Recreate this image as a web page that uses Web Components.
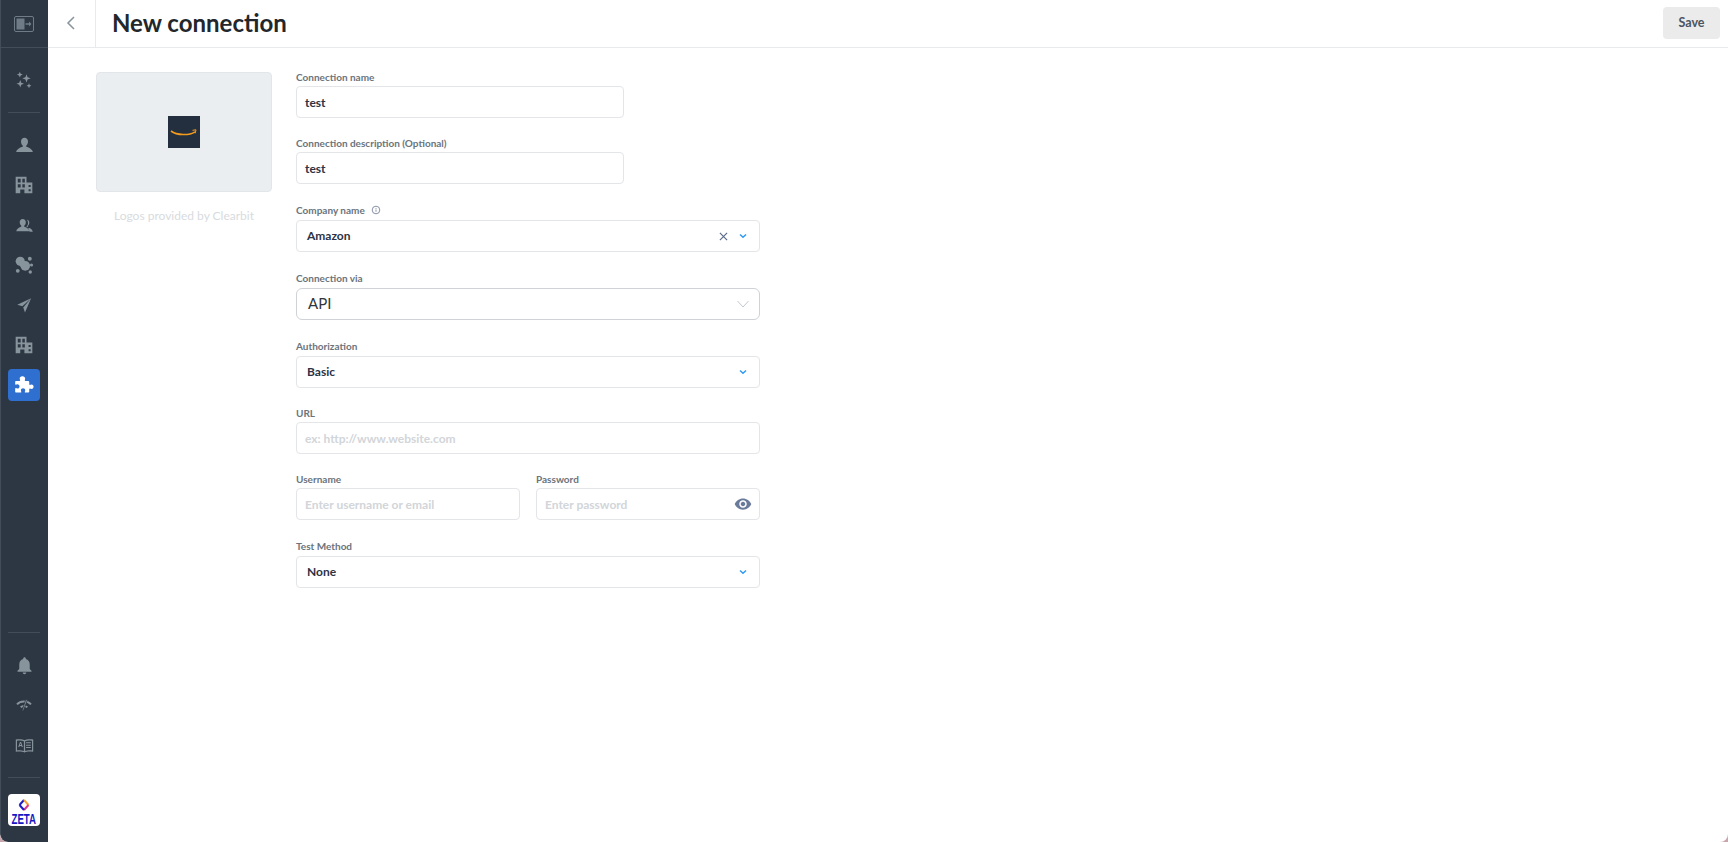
<!DOCTYPE html>
<html>
<head>
<meta charset="utf-8">
<title>New connection</title>
<style>
  html, body { margin: 0; height: 100%; background: #c9a6ad; }
  body { font-family: Lato, "Open Sans", sans-serif; overflow: hidden; }
</style>
</head>
<body>
<app-shell>
  <side-bar slot="nav"></side-bar>
  <top-bar slot="top" title="New connection"></top-bar>
  <logo-panel slot="logo"></logo-panel>
  <connection-form slot="form"></connection-form>
</app-shell>

<script>
const ICONS = {
  panel: '<rect x="2.500" y="4.500" width="19" height="15" rx="1.500" fill="none" stroke="currentColor" stroke-width="1"/><rect x="4.500" y="6.500" width="8" height="11"/><path d="M13.500 11.200h3.500V9.500l2.500 2.500-2.500 2.500v-1.700h-3.500z"/>',
  sparkle: '<path d="M7 2l1 2.500L10.500 5.500 8 6.500 7 9 6 6.500 3.500 5.500 6 4.500zM15 5l1.300 3.700L20 10l-3.700 1.300L15 15l-1.300-3.700L10 10l3.700-1.300zM7.500 12l1.200 3.300L12 16.500l-3.300 1.200L7.500 21l-1.200-3.300L3 16.500l3.300-1.200zM18 16l.9 2.100L21 19l-2.100.9L18 22l-.9-2.100L15 19l2.100-.9z"/>',
  person: '<path d="M12 3c-2.500 0-4 2-4 4.400 0 2 .9 3.800 2 4.700v1.200c-2.500.8-6.200 2-7.500 5.700v.5h19v-.5c-1.300-3.700-5-4.900-7.500-5.700v-1.200c1.100-.9 2-2.700 2-4.700C16 5 14.500 3 12 3z"/>',
  building: '<path fill-rule="evenodd" d="M2 2h13v7h7v13H2zM4.500 4.500V9H8V4.500zM10 4.500V9h3V4.500zM4.500 11v4H8v-4zM10 11v4h3v-4zM7.500 17.500V22h5v-4.500zM17.500 12v2.500H20V12zM17.500 17v2.500H20V17z"/>',
  people: '<path d="M10 4.500c-2.200 0-3.500 1.700-3.500 3.900 0 1.700.7 3.100 1.800 4v1c-2.200.7-5.200 1.800-5.800 5.300h15c-.5-3.500-3.500-4.600-5.800-5.300v-1c1.100-.9 1.800-2.300 1.800-4 0-2.200-1.300-3.900-3.500-3.900z"/><path d="M14.500 5c1.800.3 3 1.800 3 3.700 0 1.600-.6 3-1.600 3.700v1l-1.400.9c-.1-.4-.1-.9 0-1.400 1-.9 1.500-2.400 1.500-3.900 0-1.600-.5-3-1.500-4zM17.500 14.800c1.800.6 3.500 1.900 4 4.400h-3.700c-.2-1.500-1-2.800-2.200-3.600z"/>',
  molecule: '<circle cx="7.500" cy="7.500" r="5.500"/><circle cx="13.500" cy="13" r="5.800"/><path d="M10 6l7 5-6 6-6-6z"/><circle cx="19" cy="4.500" r="2.300"/><circle cx="21" cy="12" r="1.900"/><circle cx="4.500" cy="19" r="2.300"/><circle cx="19.500" cy="20.500" r="2.100"/>',
  plane: '<path d="M21.500 3L3 11.500l6.800 2.300zM21.500 3L11 15.200l2.300 6.800z"/>',
  bell: '<path d="M12 22c1.100 0 2-.9 2-2h-4c0 1.100.89 2 2 2zm6-6v-5c0-3.070-1.640-5.640-4.500-6.320V4c0-.83-.67-1.500-1.500-1.500s-1.500.67-1.500 1.500v.68C7.630 5.360 6 7.920 6 11v5l-2 2v1h16v-1l-2-2z"/>',
  wifi: '<g fill="none" stroke="currentColor" stroke-width="3"><path d="M1.500 11C7 5.500 17 5.500 22.500 11"/><path d="M7 15.500C10 13 14 13 17 15.500"/></g><path d="M14.500 4h2.800L11 21H9z" stroke="#2d3643" stroke-width="1.200"/>',
  book: '<path fill-rule="evenodd" d="M1 4.500c3.700-.8 8-.8 11 .8 3-1.600 7.300-1.600 11-.8v15.500c-3.700-.8-8-.8-11 .8-3-1.600-7.300-1.600-11-.8zM2.500 6v12.300c2.900-.4 6.300-.3 8.700.8V6.600C9 5.500 5.400 5.500 2.500 6zM12.800 6.600v12.500c2.400-1.100 5.800-1.200 8.700-.8V6c-2.900-.5-6.500-.5-8.700.6z"/><path d="M6.300 7.500h1.400l2.200 6.500H8.500l-.4-1.300H5.900L5.500 14H4.100zM6.200 11.500h1.600L7 9zM14 8h6v1.300h-6zM14 11h6v1.300h-6zM14 14h6v1.300h-6z"/>',
  puzzle: '<path d="M10.300 1.500c1.800 0 3.100 1.300 3.100 2.900 0 .8-.5 1.300-.5 2 0 .5.3.7.9.7h3.300c.8 0 1.200.4 1.200 1.200v2.900c0 .6.3.9.8.9.600 0 1.100-.6 2-.6 1.400 0 2.400 1.200 2.400 2.600s-1 2.700-2.400 2.700c-.9 0-1.400-.6-2-.6-.5 0-.8.3-.8.9v2.800c0 .8-.4 1.200-1.200 1.200h-3.300c-.6 0-.9-.3-.9-.8 0-.6.6-1.100.6-2 0-1.400-1.200-2.400-2.600-2.400s-2.700 1-2.700 2.400c0 .9.600 1.400.600 2 0 .5-.3.800-.9.800H2.700c-.8 0-1.300-.4-1.300-1.200v-3.300c0-.6.3-.9.800-.9.600 0 1.100.6 2 .6 1.400 0 2.400-1.200 2.400-2.600s-1-2.600-2.400-2.600c-.9 0-1.400.6-2 .6-.5 0-.8-.3-.8-.9V8.300c0-.8.500-1.200 1.300-1.200h3.800c.6 0 .9-.2.9-.7 0-.7-.6-1.200-.6-2 0-1.600 1.200-2.900 3.100-2.900z"/>',
  eye: '<path d="M12 4.500C7 4.500 2.730 7.610 1 12c1.730 4.390 6 7.500 11 7.500s9.270-3.110 11-7.500c-1.730-4.390-6-7.500-11-7.500zM12 17c-2.760 0-5-2.240-5-5s2.240-5 5-5 5 2.240 5 5-2.240 5-5 5zm0-8c-1.660 0-3 1.340-3 3s1.340 3 3 3 3-1.340 3-3-1.340-3-3-3z"/>'
};

// small svg helper, fill follows currentColor
function icon(name, size) {
  return `<svg viewBox="0 0 24 24" width="${size}" height="${size}" fill="currentColor" aria-hidden="true">${ICONS[name]}</svg>`;
}

class AppShell extends HTMLElement {
  constructor() {
    super();
    this.attachShadow({ mode: 'open' });
    this.shadowRoot.innerHTML = `
      <style>
        :host { display: block; width: 1728px; height: 842px; }
        .frame {
          display: flex; width: 100%; height: 100%; overflow: hidden;
          background: #fff; border-radius: 0 0 8px 8px;
        }
        .main { flex: 1; display: flex; flex-direction: column; min-width: 0; }
        .content { display: flex; gap: 24px; padding: 24px 0 0 48px; }
      </style>
      <div class="frame">
        <slot name="nav"></slot>
        <div class="main">
          <slot name="top"></slot>
          <div class="content">
            <slot name="logo"></slot>
            <slot name="form"></slot>
          </div>
        </div>
      </div>`;
  }
}

class NavItem extends HTMLElement {
  constructor() {
    super();
    this.attachShadow({ mode: 'open' });
  }
  connectedCallback() {
    const size = this.getAttribute('size') || 20;
    this.shadowRoot.innerHTML = `
      <style>
        :host { display: flex; height: 40px; align-items: center; justify-content: center; color: #87949c; }
        .box {
          width: 32px; height: 32px; border-radius: 4px;
          display: flex; align-items: center; justify-content: center;
        }
        :host([active]) .box { background: #2f6fd0; color: #fff; }
        :host([dim]) { color: #6f7c88; }
        svg { display: block; }
      </style>
      <div class="box">${icon(this.getAttribute('icon'), size)}</div>`;
  }
}

class SideBar extends HTMLElement {
  constructor() {
    super();
    this.attachShadow({ mode: 'open' });
    this.shadowRoot.innerHTML = `
      <style>
        :host {
          display: flex; flex-direction: column; flex: none; width: 48px; height: 100%;
          box-sizing: border-box; background: #2d3643; border-left: 1px solid #434c59;
          border-bottom-left-radius: 8px;
        }
        .head {
          height: 47px; flex: none; margin-left: -1px; border-bottom: 1px solid #434c59;
          display: flex; flex-direction: column; justify-content: center;
        }
        .group { display: flex; flex-direction: column; margin-left: -1px; }
        .one { padding-top: 12px; }
        .three { margin-top: auto; padding-bottom: 12px; }
        hr { border: 0; height: 1px; background: #434c59; width: 32px; margin: 0; align-self: center; flex: none; }
        .d1 { margin: 12px 0 12px -1px; }
        .d2 { margin-left: -1px; }
        .gap { height: 12px; }
        .brand {
          width: 32px; height: 32px; margin: 16px 0 16px 7px; flex: none;
          background: #fff; border-radius: 4px; overflow: hidden;
          display: flex; flex-direction: column; align-items: center;
          color: #1717c4; font: 700 14px/10px "Liberation Sans", sans-serif;
        }
        .brand svg { display: block; margin-top: 5px; margin-bottom: 3px; flex: none; }
        .brand span { display: block; transform: scaleX(.69); white-space: nowrap; }
      </style>
      <div class="head"><nav-item icon="panel" size="24" dim></nav-item></div>
      <div class="group one"><nav-item icon="sparkle" size="20"></nav-item></div>
      <hr class="d1">
      <div class="group">
        <nav-item icon="person" size="21"></nav-item>
        <nav-item icon="building" size="20"></nav-item>
        <nav-item icon="people" size="21"></nav-item>
        <nav-item icon="molecule" size="20"></nav-item>
        <nav-item icon="plane" size="18"></nav-item>
        <nav-item icon="building" size="20"></nav-item>
        <nav-item icon="puzzle" size="20" active></nav-item>
      </div>
      <div class="group three">
        <hr>
        <div class="gap"></div>
        <nav-item icon="bell" size="21"></nav-item>
        <nav-item icon="wifi" size="16"></nav-item>
        <nav-item icon="book" size="19"></nav-item>
      </div>
      <hr class="d2">
      <div class="brand">
        <svg width="12" height="12" viewBox="0 0 12 12" fill="none" stroke-width="2">
          <path d="M6 1L1.500 6" stroke="#1c1cc8"/><path d="M6 1l4.500 5" stroke="#f3a53b"/>
          <path d="M10.500 6L6 11" stroke="#d83a8f"/><path d="M1.500 6L6 11" stroke="#1c1cc8"/>
        </svg>
        <span>ZETA</span>
      </div>`;
  }
}

class TopBar extends HTMLElement {
  constructor() {
    super();
    this.attachShadow({ mode: 'open' });
  }
  connectedCallback() {
    this.shadowRoot.innerHTML = `
      <style>
        :host {
          display: flex; align-items: stretch; flex: none; height: 48px;
          box-sizing: border-box; border-bottom: 1px solid #e8ebed; background: #fff;
        }
        .back {
          width: 48px; flex: none; box-sizing: border-box; border-right: 1px solid #e8ebed;
          display: flex; align-items: center; justify-content: center;
        }
        .back svg { margin-top: -2px; margin-left: -2px; }
        h1 {
          margin: -2px 0 0 16px; flex: 1; align-self: center;
          font: 700 24px/32px Lato, sans-serif; color: #23272b;
        }
        button {
          align-self: flex-start; margin: 7px 8px 0 0; width: 57px; height: 32px;
          border: 0; border-radius: 4px; background: #ebebeb; color: #4a5561;
          font: 700 12.500px Lato, sans-serif; padding: 0 0 2px;
        }
      </style>
      <div class="back">
        <svg width="12" height="14" viewBox="0 0 12 14" fill="none" stroke="#87949c" stroke-width="1.500"><path d="M9 1L3 7l6 6"/></svg>
      </div>
      <h1>${this.getAttribute('title')}</h1>
      <button>Save</button>`;
  }
}

class LogoPanel extends HTMLElement {
  constructor() {
    super();
    this.attachShadow({ mode: 'open' });
    this.shadowRoot.innerHTML = `
      <style>
        :host { display: block; width: 176px; flex: none; }
        .box {
          height: 120px; box-sizing: border-box; background: #ebeef1;
          border: 1px solid #e3e6e9; border-radius: 4px;
          display: flex; align-items: center; justify-content: center;
        }
        .caption {
          margin-top: 16px; text-align: center; color: #d8dbde;
          font: 400 12px/16px Lato, sans-serif;
        }
      </style>
      <div class="box">
        <svg width="32" height="32" viewBox="0 0 32 32">
          <rect width="32" height="32" fill="#232f3e"/>
          <path d="M3 15c6 4.500 18 4.700 24 .8" fill="none" stroke="#f29a1f" stroke-width="1.600"/>
          <path d="M24.500 14.300l3.500-.5-.8 3.500" fill="none" stroke="#f29a1f" stroke-width="1"/>
        </svg>
      </div>
      <div class="caption">Logos provided by Clearbit</div>`;
  }
}

// label + control box. value/placeholder come from attributes, extras through the slot
class FormField extends HTMLElement {
  constructor() {
    super();
    this.attachShadow({ mode: 'open' });
  }
  connectedCallback() {
    const value = this.getAttribute('value');
    const placeholder = this.getAttribute('placeholder');
    this.shadowRoot.innerHTML = `
      <style>
        :host { display: block; }
        .label {
          height: 14px; display: flex; align-items: flex-start; gap: 6px;
          font: 700 10px/12px Lato, sans-serif; color: #6b747c;
        }
        .label span { margin-top: -1px; }
        :host([tall]) .label { height: 16px; }
        :host([tall]) .label span { margin-top: 0; }
        .control {
          height: 32px; box-sizing: border-box; border: 1px solid #e3e5e8; border-radius: 4px;
          display: flex; align-items: center; padding: 0 8px; gap: 8px; background: #fff;
        }
        .value { flex: 1; font: 700 12px Lato, sans-serif; color: #2c3344; }
        .ph { flex: 1; font: 700 12px Lato, sans-serif; color: #d2d5d9; }
        :host([select]) .control { padding: 0 12px 0 10px; }
        :host([select]) .value { margin-top: -2px; }
        :host([pad-eye]) .control { padding-right: 7px; }
        :host([native]) .control { border-color: #cfd2d6; border-radius: 6px; padding: 0 10px 0 11px; }
        :host([native]) .value { font: 400 15px Lato, sans-serif; color: #30353b; margin-top: -2px; }
        ::slotted(svg) { display: block; flex: none; }
        .extra { display: flex; align-items: center; gap: 11px; }
      </style>
      <div class="label"><span>${this.getAttribute('label')}</span><slot name="hint"></slot></div>
      <div class="control">
        ${value ? `<span class="value">${value}</span>` : `<span class="ph">${placeholder || ''}</span>`}
        <div class="extra"><slot></slot></div>
      </div>`;
  }
}

const BLUE_CHEVRON = '<svg width="8" height="6" viewBox="0 0 8 6" fill="none" stroke="#2f9bf0" stroke-width="1.500"><path d="M1 1.500L4 4.300 7 1.500"/></svg>';

class ConnectionForm extends HTMLElement {
  constructor() {
    super();
    this.attachShadow({ mode: 'open' });
    this.shadowRoot.innerHTML = `
      <style>
        :host { display: flex; flex-direction: column; gap: 20px; width: 464px; flex: none; }
        .short { width: 328px; }
        .pair { display: grid; grid-template-columns: 224px 224px; gap: 16px; }
        .hint { display: block; margin-top: 1px; }
      </style>
      <form-field class="short" label="Connection name" value="test"></form-field>
      <form-field class="short" label="Connection description (Optional)" value="test"></form-field>
      <form-field tall select label="Company name" value="Amazon">
        <svg class="hint" slot="hint" width="10" height="10" viewBox="0 0 10 10" fill="none" stroke="#6a7690" stroke-width=".8"><circle cx="5" cy="5" r="3.800"/><path d="M5 4.500v2.200M5 3v.8"/></svg>
        <svg width="9" height="9" viewBox="0 0 10 10" fill="none" stroke="#5a6a8a" stroke-width="1.300"><path d="M1 1l8 8M9 1l-8 8"/></svg>
        ${BLUE_CHEVRON}
      </form-field>
      <form-field tall native label="Connection via" value="API">
        <svg width="12" height="8" viewBox="0 0 12 8" fill="none" stroke="#c4c8cc" stroke-width="1"><path d="M.5 1L6 7l5.500-6"/></svg>
      </form-field>
      <form-field tall select label="Authorization" value="Basic">${BLUE_CHEVRON}</form-field>
      <form-field label="URL" placeholder="ex: http://www.website.com"></form-field>
      <div class="pair">
        <form-field label="Username" placeholder="Enter username or email"></form-field>
        <form-field pad-eye label="Password" placeholder="Enter password">${icon('eye', 18).replace('<svg', '<svg style="color:#6a7a9a"')}</form-field>
      </div>
      <form-field tall select label="Test Method" value="None">${BLUE_CHEVRON}</form-field>`;
  }
}

customElements.define('app-shell', AppShell);
customElements.define('nav-item', NavItem);
customElements.define('side-bar', SideBar);
customElements.define('top-bar', TopBar);
customElements.define('logo-panel', LogoPanel);
customElements.define('form-field', FormField);
customElements.define('connection-form', ConnectionForm);
</script>
</body>
</html>
